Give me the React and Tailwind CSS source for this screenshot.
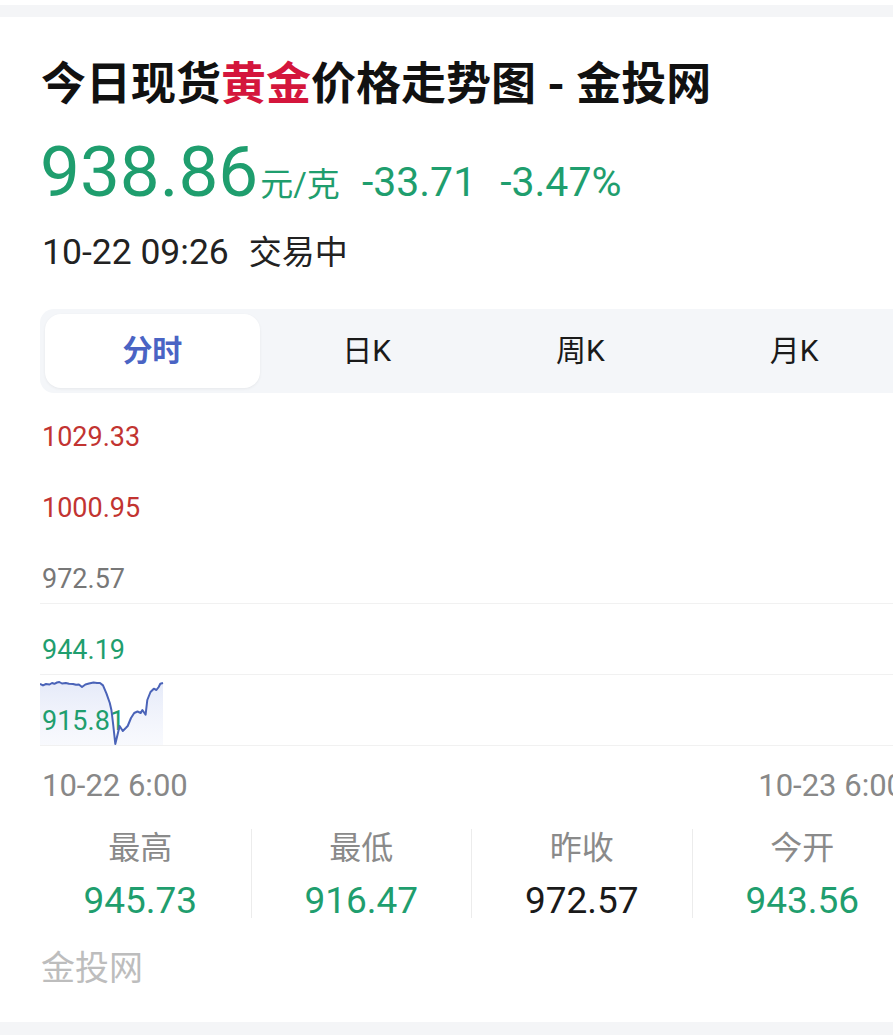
import React from "react";

const pts = [
  [0, 290.8], [3, 292.4], [6, 291], [9.5, 291.5], [12, 290], [14.4, 290.8], [17, 289.5], [19.3, 289],
  [22, 290.5], [25.8, 290], [29, 290.8], [33, 291], [36, 291.8], [38.9, 291.5], [42, 294], [45.4, 291.5],
  [49, 290.5], [53.5, 289.5], [57, 290], [60, 290], [63, 292.4], [66.5, 300.6], [69.8, 310], [71.4, 317],
  [73, 330], [75.3, 351], [78, 339.7], [79.6, 333], [82.8, 338], [86, 334.8], [87.7, 333], [91, 325],
  [94.2, 320], [97.5, 318.5], [100.7, 320], [102.4, 317], [105.6, 321.7], [107.3, 307], [110.5, 299],
  [113.8, 295.7], [116.4, 297], [118.7, 294], [120.3, 290.8], [123, 290],
];

const linePath = pts.map((p, i) => (i === 0 ? "M" : "L") + p[0] + " " + p[1]).join(" ");
const fillPath = linePath + " L123 352 L0 352 Z";

function Chart() {
  const rows = [
    { v: "1029.33", c: "text-[#c23431]", b: "border-transparent", h: "h-[69px]" },
    { v: "1000.95", c: "text-[#c23431]", b: "border-transparent", h: "h-[71px]" },
    { v: "972.57", c: "text-[#777777]", b: "border-[#f1f1f1]", h: "h-[71px]" },
    { v: "944.19", c: "text-[#1f9e6e]", b: "border-[#f1f1f1]", h: "h-[71px]" },
    { v: "915.81", c: "text-[#1f9e6e]", b: "border-[#f1f1f1]", h: "h-[71px]" },
  ];
  return (
    <div className="relative ml-[40px] w-[866px]">
      <svg className="absolute left-0 top-0 pointer-events-none" width="866" height="355" viewBox="0 0 866 355">
        <defs>
          <linearGradient id="g" x1="0" y1="0" x2="0" y2="1">
            <stop offset="0%" stopColor="#dfe5f7" stopOpacity="0.8" />
            <stop offset="100%" stopColor="#eef1fb" stopOpacity="0.4" />
          </linearGradient>
        </defs>
        <path d={fillPath} fill="url(#g)" />
      </svg>
      {rows.map((r) => (
        <div key={r.v} className={`relative ${r.h} border-b ${r.b} flex items-end pb-[9px] pl-[2px]`}>
          <span className={`text-[27px] leading-[30px] ${r.c}`}>{r.v}</span>
        </div>
      ))}
      <svg className="absolute left-0 top-0 pointer-events-none" width="866" height="355" viewBox="0 0 866 355">
        <path d={linePath} fill="none" stroke="#4a63b8" strokeWidth="2" strokeLinejoin="round" />
      </svg>
    </div>
  );
}

function Stat({ label, value, color, first }) {
  return (
    <div className={`h-[89px] flex flex-col items-center ${first ? "" : "border-l border-[#ececec]"}`}>
      <div className="text-[32px] leading-[36px] mt-[1px] text-[#8a8a8a]">{label}</div>
      <div className={`text-[37px] leading-[40px] mt-[15px] ${color}`}>{value}</div>
    </div>
  );
}

export default function App() {
  return (
    <div className="w-[893px] h-[1035px] overflow-hidden bg-white flex flex-col font-['Roboto','Noto_Sans_CJK_SC',sans-serif] text-[#1a1a1a]">
      <div className="h-[5px] shrink-0" />
      <div className="h-[12px] shrink-0 bg-[#f4f5f7]" />

      <div className="pl-[41px] mt-[40px] text-[45px] leading-[56px] font-bold whitespace-nowrap text-[#111]">
        今日现货<span className="text-[#d4163c]">黄金</span>价格走势图 - 金投网
      </div>

      <div className="pl-[40px] mt-[24px] flex items-baseline whitespace-nowrap text-[#1f9e6e]">
        <span className="text-[71px] leading-[70px]">938.86</span>
        <span className="text-[33px] ml-[2px]">元/克</span>
        <span className="text-[41px] ml-[22px]">-33.71</span>
        <span className="text-[41px] ml-[24px]">-3.47%</span>
      </div>

      <div className="pl-[42px] mt-[18px] leading-[40px] text-[#222] whitespace-nowrap flex items-baseline">
        <span className="text-[35.5px]">10-22 09:26</span>
        <span className="text-[33px] ml-[20px]">交易中</span>
      </div>

      <div className="ml-[40px] mt-[36px] w-[866px] h-[84px] shrink-0 bg-[#f4f6f9] rounded-l-[14px] p-[5px] flex">
        <div className="w-[215px] h-full bg-white rounded-[16px] shadow-[0_1px_3px_rgba(0,0,0,0.06)] flex items-center justify-center text-[30px] font-bold text-[#4a64c4]">
          分时
        </div>
        <div className="w-[214px] h-full flex items-center justify-center text-[30px] text-[#1a1a1a]">日K</div>
        <div className="w-[214px] h-full flex items-center justify-center text-[30px] text-[#1a1a1a]">周K</div>
        <div className="w-[214px] h-full flex items-center justify-center text-[30px] text-[#1a1a1a]">月K</div>
      </div>

      <Chart />

      <div className="ml-[42px] w-[862px] mt-[22px] flex justify-between text-[31px] leading-[36px] text-[#888888] whitespace-nowrap">
        <span>10-22 6:00</span>
        <span>10-23 6:00</span>
      </div>

      <div className="ml-[30px] w-[882px] mt-[25px] grid grid-cols-4">
        <Stat label="最高" value="945.73" color="text-[#1f9e6e]" first />
        <Stat label="最低" value="916.47" color="text-[#1f9e6e]" />
        <Stat label="昨收" value="972.57" color="text-[#1a1a1a]" />
        <Stat label="今开" value="943.56" color="text-[#1f9e6e]" />
      </div>

      <div className="pl-[41px] mt-[30px] text-[34px] leading-[40px] text-[#bdbdbd]">金投网</div>

      <div className="mt-auto h-[13px] shrink-0 bg-[#f4f5f7]" />
    </div>
  );
}
